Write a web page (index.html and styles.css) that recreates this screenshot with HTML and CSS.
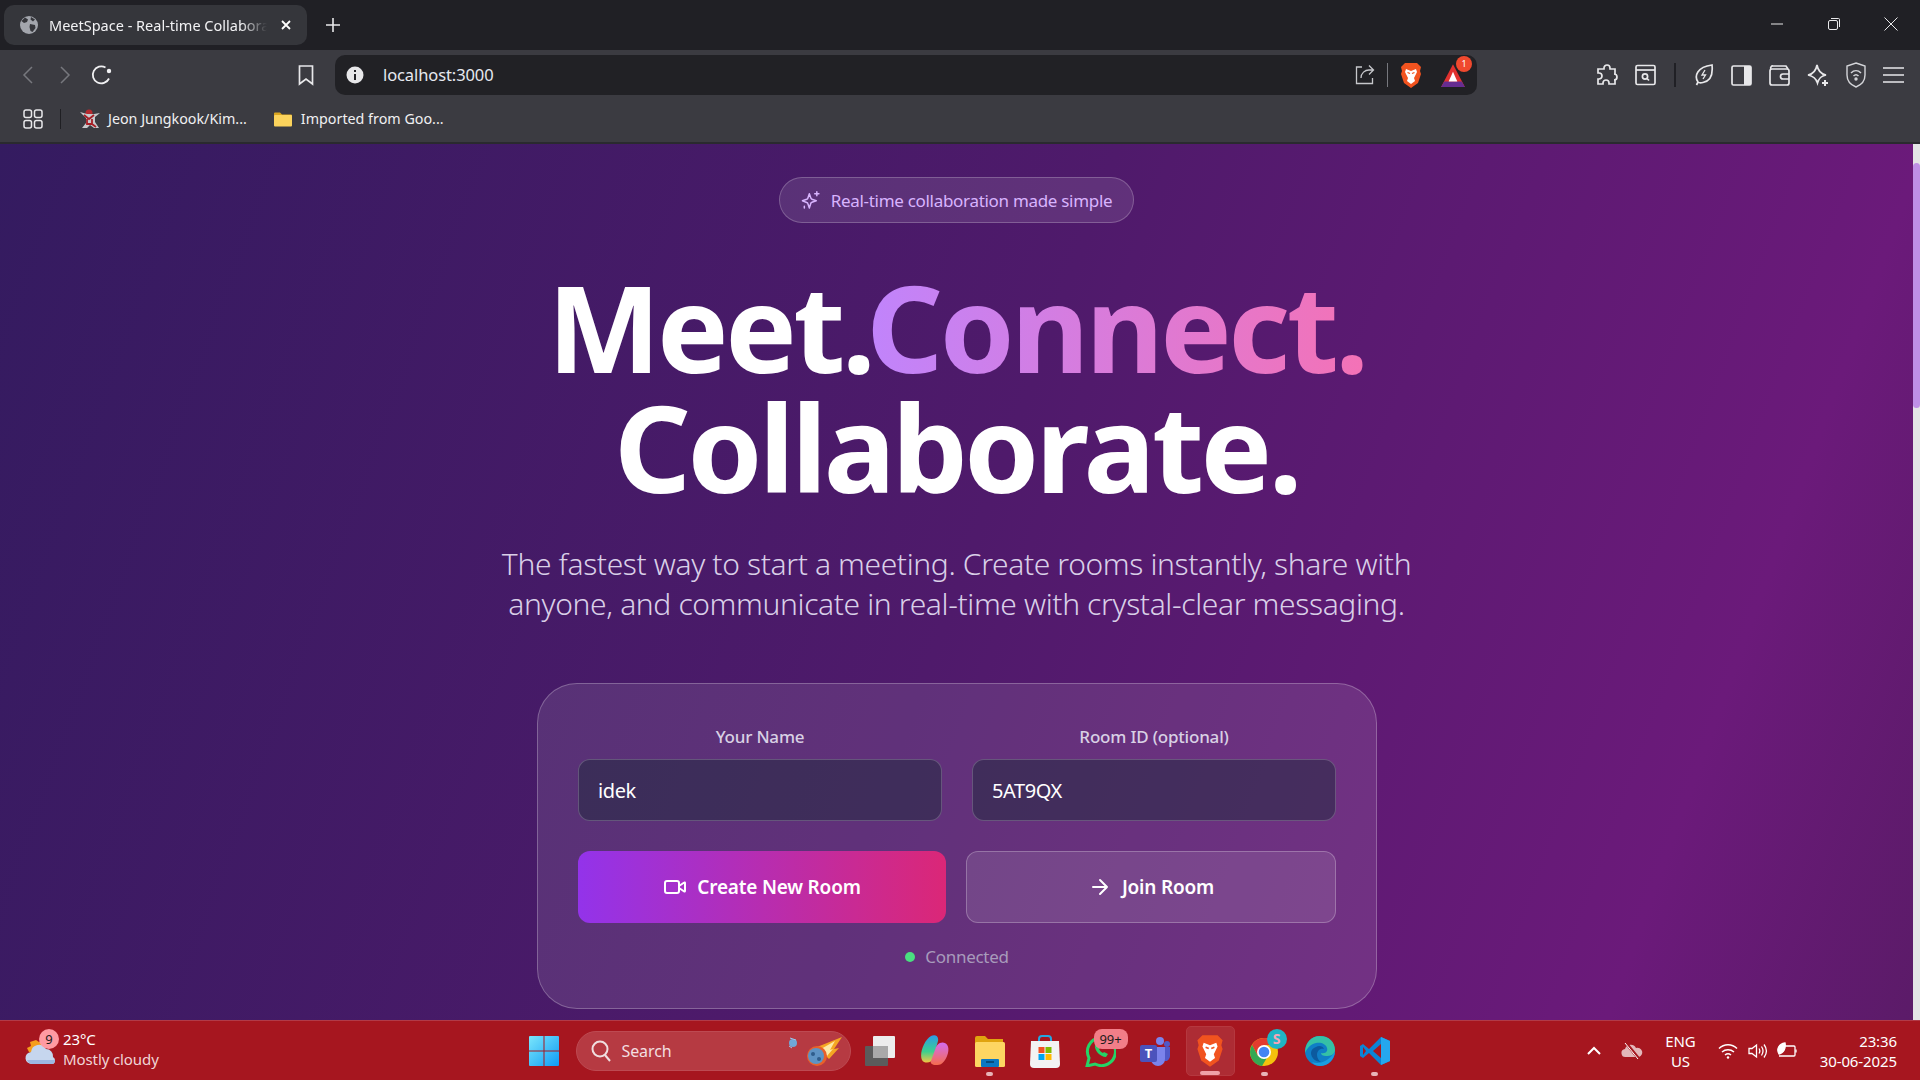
FILE: index.html
```html
<!DOCTYPE html>
<html lang="en">
<head>
    <meta charset="UTF-8">
    <meta name="viewport" content="width=device-width, initial-scale=1.0">
    <title>MeetSpace - Real-time Collaboration</title>
    <link rel="stylesheet" href="styles.css">
</head>
<body>
    <!-- browser tab strip -->
    <div class="tabstrip">
        <div class="tab">
            <svg class="tab-globe" width="20" height="20" viewBox="0 0 20 20"><circle cx="10" cy="10" r="9" fill="#a3a6ad"/><path d="M6 2.5l3 2-1 2.5-3 1-2.5-2zM11 9l5 1 .5 3-3 4-2-1-1-4zM12 2l4 2.5-2 2-2.5-2z" fill="#35363b"/></svg>
            <span class="tab-title">MeetSpace - Real-time Collaboration</span>
            <svg class="tab-close" width="12" height="12" viewBox="0 0 12 12"><path d="M2 2l8 8M10 2l-8 8" stroke="#fff" stroke-width="1.8"/></svg>
        </div>
        <svg class="newtab" width="14" height="14" viewBox="0 0 14 14"><path d="M7 0v14M0 7h14" stroke="#e8e8ea" stroke-width="1.6"/></svg>
        <div class="winbtns">
            <svg width="14" height="14" viewBox="0 0 14 14"><path d="M1 7h12" stroke="#e8e8ea"/></svg>
            <svg width="14" height="14" viewBox="0 0 14 14" fill="none" stroke="#e8e8ea"><rect x="1.5" y="3.5" width="9" height="9" rx="1.5"/><path d="M4 1.5h7.5a1 1 0 0 1 1 1V10"/></svg>
            <svg width="14" height="14" viewBox="0 0 14 14"><path d="M.5.5l13 13M13.5.5l-13 13" stroke="#e8e8ea"/></svg>
        </div>
    </div>

    <!-- toolbar + address bar -->
    <div class="toolbar">
        <svg class="nav-back" width="12" height="20" viewBox="0 0 12 20" fill="none" stroke="#77787e" stroke-width="1.5"><path d="M10 2L2 10l8 8"/></svg>
        <svg class="nav-fwd" width="12" height="20" viewBox="0 0 12 20" fill="none" stroke="#77787e" stroke-width="1.5"><path d="M2 2l8 8-8 8"/></svg>
        <svg class="nav-reload" width="22" height="22" viewBox="0 0 22 22" fill="none" stroke="#f0f0f2" stroke-width="1.8"><path d="M18 14.5A8.5 8.5 0 1 1 14.5 3.5"/><circle cx="18" cy="7" r="1.3" fill="#f0f0f2"/></svg>
        <svg class="nav-mark" width="18" height="22" viewBox="0 0 18 22" fill="none" stroke="#e8e8ea" stroke-width="1.7"><path d="M2.5 2h13v18L9 15l-6.5 5z"/></svg>
        <div class="urlbar">
            <svg width="18" height="18" viewBox="0 0 18 18"><circle cx="9" cy="9" r="8.5" fill="#e8e8ea"/><path d="M9 4v2M9 8v6" stroke="#222226" stroke-width="2"/></svg>
            <span class="url">localhost:3000</span>
            <svg class="url-share" width="20" height="20" viewBox="0 0 20 20" fill="none" stroke="#c6c7cb" stroke-width="1.3"><path d="M7 2H1.5v16.5h16V13M6 13c0-5 4-8 8-8h4.5M14 .5L18.500 5 14 9.500"/></svg>
            <span class="url-sep"></span>
            <svg class="url-brave" width="22" height="27" viewBox="0 0 22 27"><path d="M5 1h12l4 4-1 4 1 3-3 9-7 5-7-5-3-9 1-3-1-4z" fill="#f1531f"/><path d="M6 7l5 2 5-2 1 3-3 6 1 3-4 3-4-3 1-3-3-6z" fill="#fff"/><path d="M7.5 10.5l2.5 1M14.5 10.5l-2.5 1" stroke="#f1531f" stroke-width="1.3"/></svg>
            <span class="rewards">
                <svg width="26" height="26" viewBox="0 0 24 24"><path d="M12 2L1 23h22z" fill="#e0312f"/><path d="M1 23h22l-3-5H4z" fill="#662d91"/><path d="M12 9l-4 9h8z" fill="#fff"/></svg>
                <span class="rewards-count">1</span>
            </span>
        </div>
        <div class="tools">
            <svg width="22" height="22" viewBox="0 0 22 22" fill="none" stroke="#e8e8ea" stroke-width="1.7"><path d="M8 4a3 3 0 0 1 6 0v1h5v5h-1a3 3 0 0 1 0 6h1v4h-6v-1a3 3 0 0 0-6 0v1H2v-5h1a3 3 0 0 0 0-6H2V5h6z"/></svg>
            <svg width="21" height="22" viewBox="0 0 21 22" fill="none" stroke="#e8e8ea" stroke-width="1.7"><rect x="1" y="1.5" width="19" height="19" rx="1.5"/><path d="M1 6h19"/><circle cx="10" cy="12.5" r="2.6"/><path d="M12 14.5l2 2"/></svg>
            <span class="tools-sep"></span>
            <svg width="20" height="24" viewBox="0 0 20 24" fill="none" stroke="#e8e8ea" stroke-width="1.7"><path d="M4 19C0 13 3 4 18 2c1 9-1 16-9 17.5-2 .5-4 .5-5-.5zM4 19l-1.5 3"/><path d="M11 7l-3 5h3.5L9 16" stroke-width="1.3"/></svg>
            <svg class="tool-panel" width="21" height="21" viewBox="0 0 21 21"><rect x="1" y="1" width="19" height="19" rx="1.5" fill="none" stroke="#e8e8ea" stroke-width="1.7"/><rect x="13" y="1" width="7" height="19" fill="#e8e8ea"/></svg>
            <svg width="21" height="22" viewBox="0 0 21 22" fill="none" stroke="#e8e8ea" stroke-width="1.7"><path d="M2 5a2 2 0 0 1 2-3h13l2 3"/><rect x="1" y="5" width="19" height="16" rx="2"/><path d="M20 10h-6a1.500 1.500 0 0 0 0 5h6"/></svg>
            <svg width="22" height="24" viewBox="0 0 22 24" fill="none" stroke="#e8e8ea" stroke-width="1.7"><path d="M10 2c1 6 4 9 9 10-5 1-7 3-8.5 8C9 15 6 13 1 12c5-1 8-4 9-10z"/><path d="M18 17v6M15 20h6" stroke-width="2"/></svg>
            <svg width="20" height="26" viewBox="0 0 20 26" fill="none" stroke="#d4d5d9" stroke-width="1.4"><path d="M10 1l9 3v9c0 6-4 10-9 12-5-2-9-6-9-12V4z"/><path d="M5 11c3-3 7-3 10 0M7.5 14c1.500-1.500 3.500-1.500 5 0" stroke-width="1.5"/><circle cx="10" cy="17" r="1" fill="#d4d5d9"/></svg>
            <svg width="21" height="18" viewBox="0 0 21 18"><path d="M0 2h21M0 9h21M0 16h21" stroke="#e8e8ea" stroke-width="1.7"/></svg>
        </div>
    </div>

    <!-- bookmarks -->
    <div class="bookmarks">
        <svg class="bm-apps" width="20" height="20" viewBox="0 0 20 20" fill="none" stroke="#e8e8ea" stroke-width="1.5"><rect x="1" y="1" width="7.5" height="7.5" rx="2"/><rect x="11.5" y="1" width="7.5" height="7.5" rx="2"/><rect x="1" y="11.5" width="7.5" height="7.5" rx="2"/><rect x="11.5" y="11.5" width="7.5" height="7.5" rx="2"/></svg>
        <span class="bm-sep"></span>
        <div class="bm-item bm-first">
            <svg width="21" height="21" viewBox="0 0 21 21"><circle cx="10" cy="5" r="3.5" fill="#b52a2f"/><path d="M1 4l6 6v5l-4 5h5l3-3 4 3h5l-4-6V9l5-4-6 1H8z" fill="#c9c9cc"/><path d="M5 7l5 4 5-4M8 11v5h5v-5M13 16l4 3" stroke="#a81f26" stroke-width="1.8" fill="none"/></svg>
            <span>Jeon Jungkook/Kim...</span>
        </div>
        <div class="bm-item">
            <svg width="20" height="16" viewBox="0 0 20 16"><path d="M1 2.5a1 1 0 0 1 1-1h5l2 2h9a1 1 0 0 1 1 1V6H1z" fill="#d9a520"/><rect x="1" y="4" width="18" height="11.5" rx="1" fill="#fbd35c"/></svg>
            <span>Imported from Goo...</span>
        </div>
    </div>

    <!-- the page itself -->
    <div class="viewport">
        <main class="page">
            <div class="pill">
                <svg width="20" height="20" viewBox="0 0 24 24" fill="none" stroke="#d8b4fe" stroke-width="1.8" stroke-linecap="round" stroke-linejoin="round"><path d="M10 4.5l1.800 5.200a2 2 0 0 0 1.300 1.300l5.200 1.800-5.200 1.800a2 2 0 0 0-1.300 1.300L10 21.500l-1.800-5.200a2 2 0 0 0-1.300-1.300L1.700 13l5.200-1.800a2 2 0 0 0 1.300-1.300z"/><path d="M19 2v5M16.5 4.5h5M4 19.5v2"/></svg>
                <span>Real-time collaboration made simple</span>
            </div>
            <h1 class="headline">Meet.<span class="accent">Connect.</span><br>Collaborate.</h1>
            <p class="lead">The fastest way to start a meeting. Create rooms instantly, share with<br>anyone, and communicate in real-time with crystal-clear messaging.</p>

            <section class="card">
                <div class="fields">
                    <label class="field">
                        <span>Your Name</span>
                        <input type="text" value="idek">
                    </label>
                    <label class="field">
                        <span>Room ID (optional)</span>
                        <input type="text" value="5AT9QX">
                    </label>
                </div>
                <div class="actions">
                    <button class="btn btn-create">
                        <svg width="24" height="24" viewBox="0 0 24 24" fill="none" stroke="#fff" stroke-width="2" stroke-linecap="round" stroke-linejoin="round"><rect x="2" y="6" width="14" height="12" rx="2"/><path d="M16 13l5.200 3.500a.5.5 0 0 0 .8-.4V7.900a.5.5 0 0 0-.8-.4L16 11"/></svg>
                        Create New Room
                    </button>
                    <button class="btn btn-join">
                        <svg width="24" height="24" viewBox="0 0 24 24" fill="none" stroke="#fff" stroke-width="2" stroke-linecap="round" stroke-linejoin="round"><path d="M5 12h14M12 5l7 7-7 7"/></svg>
                        Join Room
                    </button>
                </div>
                <div class="status"><span class="dot"></span>Connected</div>
            </section>
        </main>
        <div class="scrollbar"><div class="thumb"></div></div>
    </div>

    <!-- windows taskbar -->
    <footer class="taskbar">
        <div class="weather">
            <div class="weather-icon">
                <svg width="36" height="34" viewBox="0 0 36 34"><path d="M13 6l3 2 4-2v12H6l-2-4 4-2-1-4z" fill="#f59e1b"/><path d="M9 30a6 6 0 0 1-1-12 8 8 0 0 1 15-3 7 7 0 0 1 7 8 4 4 0 0 1 0 7z" fill="#c6d6ee"/><path d="M9 30a6 6 0 0 1-5-4h28a4 4 0 0 1-2 4z" fill="#9db8e2"/></svg>
                <span class="weather-badge">9</span>
            </div>
            <div class="weather-text">
                <span>23°C</span>
                <span class="weather-sub">Mostly cloudy</span>
            </div>
        </div>

        <div class="centerbar">
            <svg class="start" width="30" height="30" viewBox="0 0 30 30"><defs><linearGradient id="winG" x1="0" y1="0" x2="1" y2="1"><stop offset="0" stop-color="#7be6fb"/><stop offset="1" stop-color="#0e9bf5"/></linearGradient></defs><path d="M0 1a1 1 0 0 1 1-1h13.5v14.5H0zM15.5 0H29a1 1 0 0 1 1 1v13.5H15.5zM0 15.5h14.5V30H1a1 1 0 0 1-1-1zM15.5 15.5H30V29a1 1 0 0 1-1 1H15.5z" fill="url(#winG)"/></svg>
            <div class="searchbox">
                <svg width="20" height="22" viewBox="0 0 20 22" fill="none" stroke="#f0dfe0" stroke-width="2"><circle cx="9" cy="9" r="7.5"/><path d="M14 15l5 6"/></svg>
                <span>Search</span>
                <svg class="meteor" width="56" height="32" viewBox="0 0 56 32"><circle cx="6" cy="8" r="4" fill="#6fa8d8"/><path d="M3 3l6 2M2 11l3 2" stroke="#9cc6ea"/><path d="M30 12L55 2 47 14 52 13 42 24z" fill="#f5a623"/><path d="M34 14l14-8-5 9 3-1-6 7z" fill="#fde9a6"/><circle cx="30" cy="21" r="10" fill="#e8602a"/><circle cx="29" cy="21" r="8" fill="#5e93c4"/><circle cx="26" cy="19" r="2" fill="#2f5d8c"/><circle cx="32" cy="24" r="2" fill="#2f5d8c"/></svg>
            </div>
            <div class="apps">
                <span class="app">
                    <svg width="30" height="30" viewBox="0 0 30 30"><rect x="0" y="10" width="23" height="20" rx="1" fill="#5b5b5b"/><rect x="8" y="0" width="22" height="22" rx="1" fill="#ededed"/><rect x="8" y="10" width="15" height="12" fill="#a9a9a9"/></svg>
                </span>
                <span class="app">
                    <svg width="30" height="32" viewBox="0 0 30 32"><defs><linearGradient id="copA" x1="0" y1="0" x2="0" y2="1"><stop offset="0" stop-color="#2b9be8"/><stop offset=".6" stop-color="#3ccf8e"/><stop offset="1" stop-color="#f5c542"/></linearGradient><linearGradient id="copB" x1="0" y1="0" x2="0" y2="1"><stop offset="0" stop-color="#d36cf0"/><stop offset="1" stop-color="#f56c4d"/></linearGradient></defs><path d="M11 1c4-2 8 0 7 5l-5 18c-1 4-9 5-11 1C-1 19 4 5 11 1z" fill="url(#copA)"/><path d="M20 8c5-2 10 2 8 10-2 7-6 13-12 12-4 0-6-2-5-4l5-14c1-2 2-3 4-4z" fill="url(#copB)"/></svg>
                </span>
                <span class="app">
                    <svg width="30" height="32" viewBox="0 0 30 32"><path d="M0 3a2 2 0 0 1 2-2h8l3 3h15v8H0z" fill="#e0a40f"/><rect x="0" y="7" width="30" height="25" rx="1.5" fill="#fdd662"/><rect x="6" y="24" width="18" height="8" rx="1" fill="#0a78c2"/><path d="M11 27h8" stroke="#053e66" stroke-width="1.5"/></svg>
                    <i class="run"></i>
                </span>
                <span class="app">
                    <svg width="30" height="34" viewBox="0 0 30 34"><path d="M9 10V5a3 3 0 0 1 3-3h6a3 3 0 0 1 3 3v5" fill="none" stroke="#25a6df" stroke-width="2"/><path d="M1 7h28l1 23a4 4 0 0 1-4 4H4a4 4 0 0 1-4-4z" fill="#f3f3f3"/><rect x="8.5" y="13" width="6" height="6" fill="#f25022"/><rect x="15.5" y="13" width="6" height="6" fill="#7fba00"/><rect x="8.5" y="20" width="6" height="6" fill="#00a4ef"/><rect x="15.5" y="20" width="6" height="6" fill="#ffb900"/></svg>
                </span>
                <span class="app">
                    <svg width="32" height="32" viewBox="0 0 32 32" fill="none"><path d="M3 31l2-8A14 14 0 1 1 11 29z" stroke="#25d366" stroke-width="3"/><path d="M11 10c-1 5 5 12 11 12l2-3-4-2-1 1c-2-1-3-2-4-4l1-1-2-4z" fill="#25d366"/></svg>
                    <span class="app-badge">99+</span>
                </span>
                <span class="app">
                    <svg width="30" height="30" viewBox="0 0 30 30"><circle cx="20" cy="5" r="4" fill="#7b83eb"/><circle cx="27" cy="8" r="3" fill="#5059c9"/><path d="M23 11h7v9a5 5 0 0 1-6 5z" fill="#5059c9"/><path d="M11 11h14v12a7 7 0 0 1-14 0z" fill="#7b83eb"/><rect x="0" y="9" width="17" height="17" rx="2" fill="#4b53bc"/><text x="8.5" y="22" text-anchor="middle" class="teams-t">T</text></svg>
                </span>
                <span class="app app-active">
                    <svg width="28" height="34" viewBox="0 0 22 27"><path d="M5 1h12l4 4-1 4 1 3-3 9-7 5-7-5-3-9 1-3-1-4z" fill="#f1531f"/><path d="M6 7l5 2 5-2 1 3-3 6 1 3-4 3-4-3 1-3-3-6z" fill="#fff"/><path d="M7.5 10.5l2.5 1M14.5 10.5l-2.5 1" stroke="#f1531f" stroke-width="1.3"/></svg>
                    <i class="run run-wide"></i>
                </span>
                <span class="app">
                    <svg width="32" height="32" viewBox="0 0 32 32"><circle cx="15" cy="17" r="14" fill="#f4c20d"/><path d="M15 3a14 14 0 0 0-12 7l6 11 6-11h13A14 14 0 0 0 15 3z" fill="#e33b2e"/><path d="M3 10a14 14 0 0 0 10 21l6-10-10 0z" fill="#34a853"/><circle cx="15" cy="17" r="7" fill="#fff"/><circle cx="15" cy="17" r="5.3" fill="#4285f4"/></svg>
                    <span class="chrome-avatar">S</span>
                    <i class="run"></i>
                </span>
                <span class="app">
                    <svg width="32" height="32" viewBox="0 0 32 32"><circle cx="16" cy="16" r="15" fill="#0f7fc6"/><path d="M16 1c9 0 15 6 15 14 0 5-5 6-9 6-3 0-5-1-5-3 5 1 7-2 6-5-1-4-6-6-11-5C7 9 3 13 1 18 1 8 7 1 16 1z" fill="#35c1a6"/><path d="M31 17c-1 8-7 14-15 14-3 0-6-1-8-4 5 2 14 2 23-10z" fill="#1a9de0"/><path d="M12 12c3-2 7-1 8 2-4-1-7 2-7 6 0 3 2 6 4 7-5 0-10-4-10-9 0-3 2-5 5-6z" fill="#0c5a9e"/></svg>
                </span>
                <span class="app">
                    <svg width="30" height="30" viewBox="0 0 30 30"><path d="M21 1l9 4v20l-9 4L9 17l-6 5-3-2v-10l3-2 6 5z" fill="#0a84d6"/><path d="M21 1l9 4v20l-9 4z" fill="#25a7ee"/><path d="M21 8v14l-8-7z" fill="#a6161f"/><path d="M3 11l3 4-3 4z" fill="#a6161f"/></svg>
                    <i class="run"></i>
                </span>
            </div>
        </div>

        <div class="tray">
            <svg class="tray-chevron" width="14" height="9" viewBox="0 0 14 9" fill="none" stroke="#fff" stroke-width="2"><path d="M1 8l6-6 6 6"/></svg>
            <svg class="tray-cloud" width="22" height="18" viewBox="0 0 22 18"><path d="M5 15a4 4 0 0 1-1-8 6 6 0 0 1 11-1 4.5 4.5 0 0 1 3 9z" fill="#e3b7ba"/><path d="M5 1l13 16" stroke="#a6161f" stroke-width="3"/><path d="M4 1l13 16" stroke="#fff" stroke-width="1"/></svg>
            <div class="tray-lang"><span>ENG</span><span>US</span></div>
            <svg class="tray-wifi" width="20" height="16" viewBox="0 0 20 16" fill="none" stroke="#fff" stroke-width="1.5"><path d="M1 5.5c5-5 13-5 18 0M4 9c3.5-3 8.500-3 12 0M7 12c1.800-1.400 4.200-1.400 6 0"/><circle cx="10" cy="14.5" r="1.2" fill="#fff" stroke="none"/></svg>
            <svg class="tray-sound" width="20" height="18" viewBox="0 0 20 18" fill="none" stroke="#fff" stroke-width="1.3"><path d="M1 6.5h3L8.500 3v12L4 11.500H1z"/><path d="M11 6.5c1 1.500 1 3.500 0 5M13.5 4.500c2 3 2 6 0 9M16 2.500c3 4 3 9 0 13"/></svg>
            <svg class="tray-battery" width="22" height="18" viewBox="0 0 22 18" fill="none" stroke="#fff" stroke-width="1.3"><path d="M9 4h9a1 1 0 0 1 1 1v8a1 1 0 0 1-1 1H3"/><path d="M20 7.5v3"/><path d="M3 12C0 7 3 2 9 1c1 5-1 10-6 11z" fill="#fff"/></svg>
            <div class="tray-clock"><span>23:36</span><span>30-06-2025</span></div>
        </div>
    </footer>
</body>
</html>
```

FILE: styles.css
```css
* {
    margin: 0;
    padding: 0;
    box-sizing: border-box;
}

html,
body {
    height: 100%;
}

body {
    height: 100vh;
    overflow: hidden;
    display: flex;
    flex-direction: column;
    font-family: "Noto Sans", "Open Sans", sans-serif;
    color: #fff;
    background: #3b3b41;
}

/* tab strip */
.tabstrip {
    height: 50px;
    flex: none;
    background: #202025;
    display: flex;
    align-items: center;
    padding-left: 4px;
}

.tab {
    width: 303px;
    height: 40px;
    background: #35363b;
    border-radius: 10px;
    display: flex;
    align-items: center;
    padding: 0 14px 0 15px;
}

.tab-title {
    margin-left: 10px;
    width: 218px;
    font-size: 14.5px;
    white-space: nowrap;
    overflow: hidden;
    color: #f2f2f4;
    -webkit-mask-image: linear-gradient(90deg, #000 88%, transparent);
    mask-image: linear-gradient(90deg, #000 88%, transparent);
}

.tab-close {
    margin-left: 13px;
}

.newtab {
    margin-left: 19px;
}

.winbtns {
    margin-left: auto;
    display: flex;
    gap: 43px;
    padding-right: 22px;
    align-items: center;
    margin-top: -2px;
}

/* toolbar */
.toolbar {
    height: 50px;
    flex: none;
    background: #3b3b41;
    display: flex;
    align-items: center;
}

.nav-back {
    margin-left: 22px;
}

.nav-fwd {
    margin-left: 25px;
}

.nav-reload {
    margin-left: 20px;
}

.nav-mark {
    margin-left: 184px;
}

.urlbar {
    margin-left: 20px;
    width: 1142px;
    height: 40px;
    background: #212125;
    border-radius: 10px;
    display: flex;
    align-items: center;
    padding: 0 11px 0 11px;
}

.url {
    margin-left: 19px;
    margin-top: -1px;
    font-size: 16.5px;
    letter-spacing: -0.1px;
    color: #e6e9f0;
}

.url-share {
    margin-left: auto;
}

.url-sep {
    width: 1px;
    height: 24px;
    background: #77787e;
    margin: 0 12px;
}

.url-brave {
    margin-right: 18px;
}

.rewards {
    position: relative;
    display: flex;
}

.rewards-count {
    position: absolute;
    top: -6px;
    right: -6px;
    width: 16px;
    height: 16px;
    border-radius: 50%;
    background: #f0492e;
    font-size: 9px;
    line-height: 16px;
    text-align: center;
}

.tools {
    margin-left: 119px;
    display: flex;
    align-items: center;
    gap: 17px;
}

.tools-sep {
    width: 2px;
    height: 24px;
    background: #202025;
    margin: 0 1px;
}

/* bookmarks bar */
.bookmarks {
    height: 44px;
    flex: none;
    background: #3b3b41;
    border-bottom: 2px solid #2a2a2f;
    display: flex;
    align-items: center;
    padding: 0 0 5px 23px;
    font-size: 14.3px;
    color: #f0f0f2;
}

.bm-sep {
    width: 1px;
    height: 20px;
    background: #1f1f23;
    margin: 0 18px 0 17px;
}

.bm-item {
    display: flex;
    align-items: center;
    gap: 8px;
}

.bm-first {
    margin-right: 26px;
}

/* page */
.viewport {
    flex: 1;
    min-height: 0;
    display: flex;
    background: linear-gradient(110deg, #341b60 0%, #4f1a6b 50%, #6b1a7a 86%, #5b1b68 100%);
}

.page {
    flex: 1;
    min-width: 0;
    display: flex;
    flex-direction: column;
    align-items: center;
    padding-top: 33px;
}

.pill {
    height: 46px;
    width: 355px;
    flex: none;
    border: 1px solid rgba(255, 255, 255, 0.22);
    border-radius: 23px;
    background: rgba(255, 255, 255, 0.1);
    display: flex;
    align-items: center;
    justify-content: center;
    gap: 10px;
    font-size: 17px;
    letter-spacing: -0.3px;
    color: #d8b4fe;
}

.headline {
    margin-top: 44px;
    font-size: 120px;
    line-height: 120px;
    font-weight: 700;
    letter-spacing: -3.5px;
    text-align: center;
    white-space: nowrap;
}

.accent {
    background: linear-gradient(90deg, #c084fc, #f472b6);
    -webkit-background-clip: text;
    background-clip: text;
    color: transparent;
}

.lead {
    margin-top: 37px;
    font-size: 30px;
    line-height: 40px;
    font-weight: 300;
    letter-spacing: -0.37px;
    text-align: center;
    color: #d9cfe8;
    white-space: nowrap;
}

.card {
    margin-top: 59px;
    margin-left: 1px;
    width: 840px;
    height: 326px;
    flex: none;
    border: 1px solid rgba(255, 255, 255, 0.25);
    border-radius: 40px;
    background: rgba(255, 255, 255, 0.1);
    padding: 39px 40px 0;
}

.fields {
    display: grid;
    grid-template-columns: 364px 364px;
    gap: 30px;
}

.field {
    display: flex;
    flex-direction: column;
    align-items: center;
    gap: 8px;
    font-size: 17px;
    font-weight: 500;
    letter-spacing: -0.2px;
    line-height: 28px;
    color: #d8d0e4;
}

.field input {
    width: 100%;
    height: 62px;
    padding: 0 19px;
    border: 1px solid rgba(255, 255, 255, 0.2);
    border-radius: 12px;
    background: rgba(30, 41, 59, 0.5);
    font-family: inherit;
    font-size: 20px;
    letter-spacing: -0.4px;
    color: #fff;
    outline: none;
}

.actions {
    margin-top: 30px;
    display: grid;
    grid-template-columns: 368px 370px;
    gap: 20px;
}

.btn {
    height: 72px;
    border-radius: 12px;
    display: flex;
    align-items: center;
    justify-content: center;
    gap: 10px;
    font-family: inherit;
    font-size: 19px;
    font-weight: 600;
    letter-spacing: -0.2px;
    color: #fff;
    border: none;
}

.btn-create {
    background: linear-gradient(90deg, #9333ea, #db2777);
}

.btn-join {
    background: rgba(255, 255, 255, 0.1);
    border: 1px solid rgba(255, 255, 255, 0.25);
}

.status {
    margin-top: 22px;
    display: flex;
    align-items: center;
    justify-content: center;
    gap: 10px;
    font-size: 17px;
    letter-spacing: -0.3px;
    color: #a89bbb;
}

.dot {
    width: 10px;
    height: 10px;
    border-radius: 50%;
    background: #4ade80;
}

.scrollbar {
    width: 7px;
    flex: none;
    background: #e4e4e6;
    padding-top: 19px;
}

.thumb {
    height: 245px;
    background: #bf8fe6;
    border-radius: 4px;
}

/* taskbar */
.taskbar {
    height: 60px;
    flex: none;
    background: #a6161f;
    border-top: 1px solid #b23a48;
    display: grid;
    grid-template-columns: 1fr auto 1fr;
    align-items: center;
    font-size: 15px;
    letter-spacing: -0.1px;
}

.weather {
    display: flex;
    align-items: center;
    padding-left: 23px;
    gap: 4px;
}

.weather-icon {
    position: relative;
    width: 36px;
    height: 34px;
}

.weather-badge {
    position: absolute;
    top: -5px;
    left: 16px;
    width: 20px;
    height: 20px;
    border-radius: 50%;
    background: #ff9aa2;
    color: #1c1c1c;
    font-size: 13px;
    line-height: 20px;
    text-align: center;
}

.weather-text {
    display: flex;
    flex-direction: column;
    line-height: 20px;
    margin-top: -3px;
}

.weather-sub {
    color: #f0d4d6;
}

.centerbar {
    display: flex;
    align-items: center;
    margin-left: 11px;
}

.start {
    margin-right: 17px;
}

.searchbox {
    width: 275px;
    height: 40px;
    border-radius: 20px;
    background: #b63a42;
    border: 1px solid #bd4a52;
    display: flex;
    align-items: center;
    gap: 11px;
    padding-left: 14px;
    color: #f3dfe0;
    font-size: 16px;
    position: relative;
}

.meteor {
    position: absolute;
    right: 7px;
    top: 3px;
}

.apps {
    display: flex;
    margin-left: 2px;
    align-items: center;
}

.app {
    width: 55px;
    height: 50px;
    display: flex;
    align-items: center;
    justify-content: center;
    position: relative;
}

.app-active {
    width: 49px;
    margin: 0 3px;
    background: #ad2c34;
    border: 1px solid #b5383f;
    border-radius: 5px;
}

.run {
    position: absolute;
    bottom: 0;
    left: 50%;
    width: 7px;
    height: 4px;
    margin-left: -4px;
    background: #e8b4b8;
    border-radius: 2px;
}

.run-wide {
    width: 20px;
    margin-left: -10px;
    background: #f0a0a8;
}

.app-badge {
    position: absolute;
    top: 3px;
    right: 0;
    width: 34px;
    height: 20px;
    border-radius: 8px;
    background: #f27e88;
    color: #1c1c1c;
    font-size: 13px;
    line-height: 20px;
    text-align: center;
}

.chrome-avatar {
    position: absolute;
    top: 3px;
    right: 6px;
    width: 20px;
    height: 20px;
    border-radius: 50%;
    background: #1fb5c4;
    color: #f4a6b8;
    font-size: 14px;
    font-weight: 700;
    line-height: 20px;
    text-align: center;
}

.teams-t {
    font-family: "Noto Sans", sans-serif;
    font-size: 13px;
    font-weight: 700;
    fill: #fff;
}

.tray {
    display: flex;
    align-items: center;
    justify-content: flex-end;
    padding-right: 23px;
}

.tray-chevron {
    margin-right: 20px;
}

.tray-cloud {
    margin-right: 22px;
}

.tray-lang {
    display: flex;
    flex-direction: column;
    align-items: center;
    line-height: 20px;
    margin-right: 22px;
}

.tray-wifi {
    margin-right: 10px;
}

.tray-sound {
    margin-right: 8px;
}

.tray-battery {
    margin-right: 22px;
}

.tray-clock {
    display: flex;
    flex-direction: column;
    align-items: flex-end;
    line-height: 20px;
}
```
